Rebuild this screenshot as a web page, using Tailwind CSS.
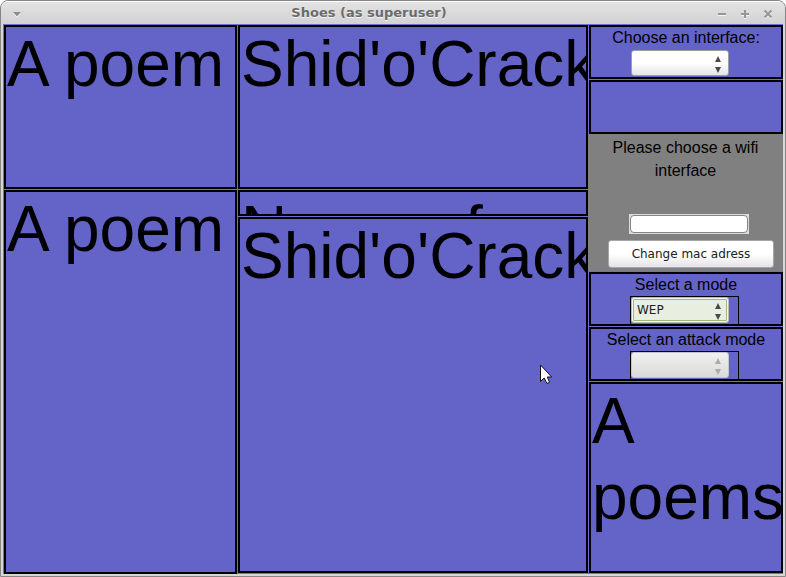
<!DOCTYPE html>
<html lang="en">
<head>
<meta charset="utf-8">
<title>Shoes (as superuser)</title>
<script src="https://cdn.jsdelivr.net/npm/@tailwindcss/browser@4"></script>
</head>
<body class="bg-white">
<div class="relative flex h-screen flex-col overflow-hidden rounded-t-lg border border-[#868686] bg-[#d6d6d6] font-['Liberation_Sans',Arial,sans-serif] text-black">
  <!-- Title bar -->
  <header class="relative flex h-[23px] shrink-0 items-center justify-center rounded-t-md border-t border-white bg-linear-to-b from-[#e3e3e3] to-[#d2d2d2]">
    <button type="button" aria-label="Window menu" class="absolute left-3 top-2.5">
      <svg class="block" width="8" height="6" viewBox="0 0 8 6"><path d="M0 1h8L4 5.500z" fill="#fff"/><path d="M0 0h8L4 4.500z" fill="#8c8c8c"/></svg>
    </button>
    <h1 class="pr-12 font-['DejaVu_Sans',sans-serif] text-[13px] font-bold leading-5 text-[#6b6b6b] [text-shadow:0_1px_0_#f4f4f4]">Shoes (as superuser)</h1>
    <div class="absolute right-3 top-1.5 flex gap-3">
      <button type="button" aria-label="Minimize"><svg class="block" width="11" height="11" viewBox="0 0 11 11" fill="none" stroke-width="2"><path d="M2 7h8" stroke="#f4f4f4"/><path d="M2 6h8" stroke="#969696"/></svg></button>
      <button type="button" aria-label="Maximize"><svg class="block" width="11" height="11" viewBox="0 0 11 11" fill="none" stroke-width="2"><path d="M2 7h8M6 3v8" stroke="#f4f4f4"/><path d="M2 6h8M6 2v8" stroke="#969696"/></svg></button>
      <button type="button" aria-label="Close"><svg class="block" width="11" height="11" viewBox="0 0 11 11" fill="none" stroke-width="2"><path d="M2.500 3.500l7 7M9.500 3.500l-7 7" stroke="#f4f4f4"/><path d="M2.500 2.500l7 7M9.500 2.500l-7 7" stroke="#969696"/></svg></button>
    </div>
  </header>

  <main class="mx-[2px] mb-[2px] grid min-h-0 flex-1 grid-cols-[minmax(0,30fr)_minmax(0,45fr)_minmax(0,25fr)] bg-[#6e6ed6]">
    <!-- Left column -->
    <div class="grid min-h-0 grid-rows-[minmax(0,165fr)_minmax(0,385fr)]">
      <section class="ml-px mt-px overflow-hidden border-2 border-black bg-[#6464c8]"><p class="-mt-px whitespace-nowrap pl-px text-[64px] leading-[76px]">A poem</p></section>
      <section class="ml-px mt-px overflow-hidden border-2 border-black bg-[#6464c8]"><p class="-mt-px whitespace-nowrap pl-px text-[64px] leading-[76px]">A poem</p></section>
    </div>

    <!-- Middle column -->
    <div class="grid min-h-0 grid-rows-[minmax(0,165fr)_minmax(0,27fr)_minmax(0,357fr)] pb-px">
      <section class="ml-px mt-px overflow-hidden border-2 border-black bg-[#6464c8]"><p class="-mt-px whitespace-nowrap pl-px text-[64px] leading-[76px]">Shid'o'Crack</p></section>
      <section class="ml-px mt-px overflow-hidden border-2 border-black bg-[#6464c8]"><p class="-mt-px whitespace-nowrap pl-px text-[64px] leading-[76px]">Name of</p></section>
      <section class="ml-px mt-px overflow-hidden border-2 border-black bg-[#6464c8]"><p class="-mt-px whitespace-nowrap pl-px text-[64px] leading-[76px]">Shid'o'Crack</p></section>
    </div>

    <!-- Controls column -->
    <div class="grid min-h-0 grid-rows-[minmax(0,55fr)_minmax(0,55fr)_minmax(0,137fr)_minmax(0,55fr)_minmax(0,55fr)_minmax(0,192fr)] pb-px">
      <section class="ml-px mt-px flex flex-col items-center overflow-hidden border-2 border-black bg-[#6464c8]">
        <label for="iface" class="text-base leading-[21px]">Choose an interface:</label>
        <div class="relative mr-[3px] mt-px h-[29px] w-[109px] shrink-0 border border-transparent">
          <select id="iface" class="block h-[26px] w-[98px] appearance-none rounded-[3px] border border-[#9c9ca4] bg-linear-to-b from-white from-50% to-[#e6e6e6] px-1.5 font-['DejaVu_Sans',sans-serif] text-xs"><option></option></select>
          <svg class="pointer-events-none absolute left-[84px] top-1.5" width="6" height="17" viewBox="0 0 6 17" fill="#4a4a4a"><path d="M3 0l3 6H0zM3 17l3-6H0z"/></svg>
        </div>
      </section>

      <section class="ml-px mt-px border-2 border-black bg-[#6464c8]"></section>

      <section class="flex flex-col overflow-hidden bg-[#808080] pt-0.5">
        <p class="px-5 text-center text-base leading-[23px]">Please choose a wifi interface</p>
        <form class="mt-8 flex flex-col items-center gap-1.5 pl-5 pr-[9px]">
          <div class="mr-1 h-5 w-[120px] bg-[#dcdcdc] p-px">
            <input type="text" aria-label="Mac address" class="block h-[18px] w-full rounded-[4px] border border-[#858585] bg-white px-1 text-xs">
          </div>
          <button type="button" class="h-7 w-full whitespace-nowrap rounded-[3px] border border-[#a6a6a6] bg-linear-to-b from-white from-50% to-[#e4e4e4] font-['DejaVu_Sans',sans-serif] text-xs leading-5 text-[#202020]">Change mac adress</button>
        </form>
      </section>

      <section class="ml-px mt-px flex flex-col items-center overflow-hidden border-2 border-black bg-[#6464c8]">
        <label for="mode" class="text-base leading-[21px]">Select a mode</label>
        <div class="relative mr-[3px] mt-px h-[29px] w-[109px] shrink-0 border border-black">
          <select id="mode" class="block h-[26px] w-[98px] appearance-none rounded-[3px] border border-[#b9b9bd] bg-[#e8eee0] px-[5px] font-['DejaVu_Sans',sans-serif] text-xs text-[#202020] outline-1 -outline-offset-3 outline-[#9fb97c] [box-shadow:inset_0_0_0_2px_#f6f6f6]"><option>WEP</option></select>
          <svg class="pointer-events-none absolute left-[84px] top-1.5" width="6" height="17" viewBox="0 0 6 17" fill="#4a4a4a"><path d="M3 0l3 6H0zM3 17l3-6H0z"/></svg>
        </div>
      </section>

      <section class="ml-px mt-px flex flex-col items-center overflow-hidden border-2 border-black bg-[#6464c8]">
        <label for="attack" class="whitespace-nowrap text-base leading-[21px]">Select an attack mode</label>
        <div class="relative mr-[3px] mt-px h-[29px] w-[109px] shrink-0 border border-black">
          <select id="attack" disabled class="block h-[26px] w-[98px] appearance-none rounded-[3px] border border-[#c4c4cc] bg-linear-to-b from-[#f0f0f0] to-[#dadada] px-1.5 font-['DejaVu_Sans',sans-serif] text-xs opacity-100"><option></option></select>
          <svg class="pointer-events-none absolute left-[84px] top-1.5" width="6" height="17" viewBox="0 0 6 17" fill="#ababab"><path d="M3 0l3 6H0zM3 17l3-6H0z"/></svg>
        </div>
      </section>

      <section class="ml-px mt-px overflow-hidden border-2 border-black bg-[#6464c8]"><p class="-mt-px pl-px text-[64px] leading-[76px]">A poems</p></section>
    </div>
  </main>

  <!-- Mouse pointer -->
  <svg class="pointer-events-none absolute left-[539px] top-[363px]" width="13" height="20" viewBox="0 0 13 20"><path d="M.5 1v16.500l3.700-3.500L7 19.500l2.500-1.200L7.300 13H11.700z" fill="#fff" stroke="#111" stroke-width="1"/></svg>
</div>
</body>
</html>
